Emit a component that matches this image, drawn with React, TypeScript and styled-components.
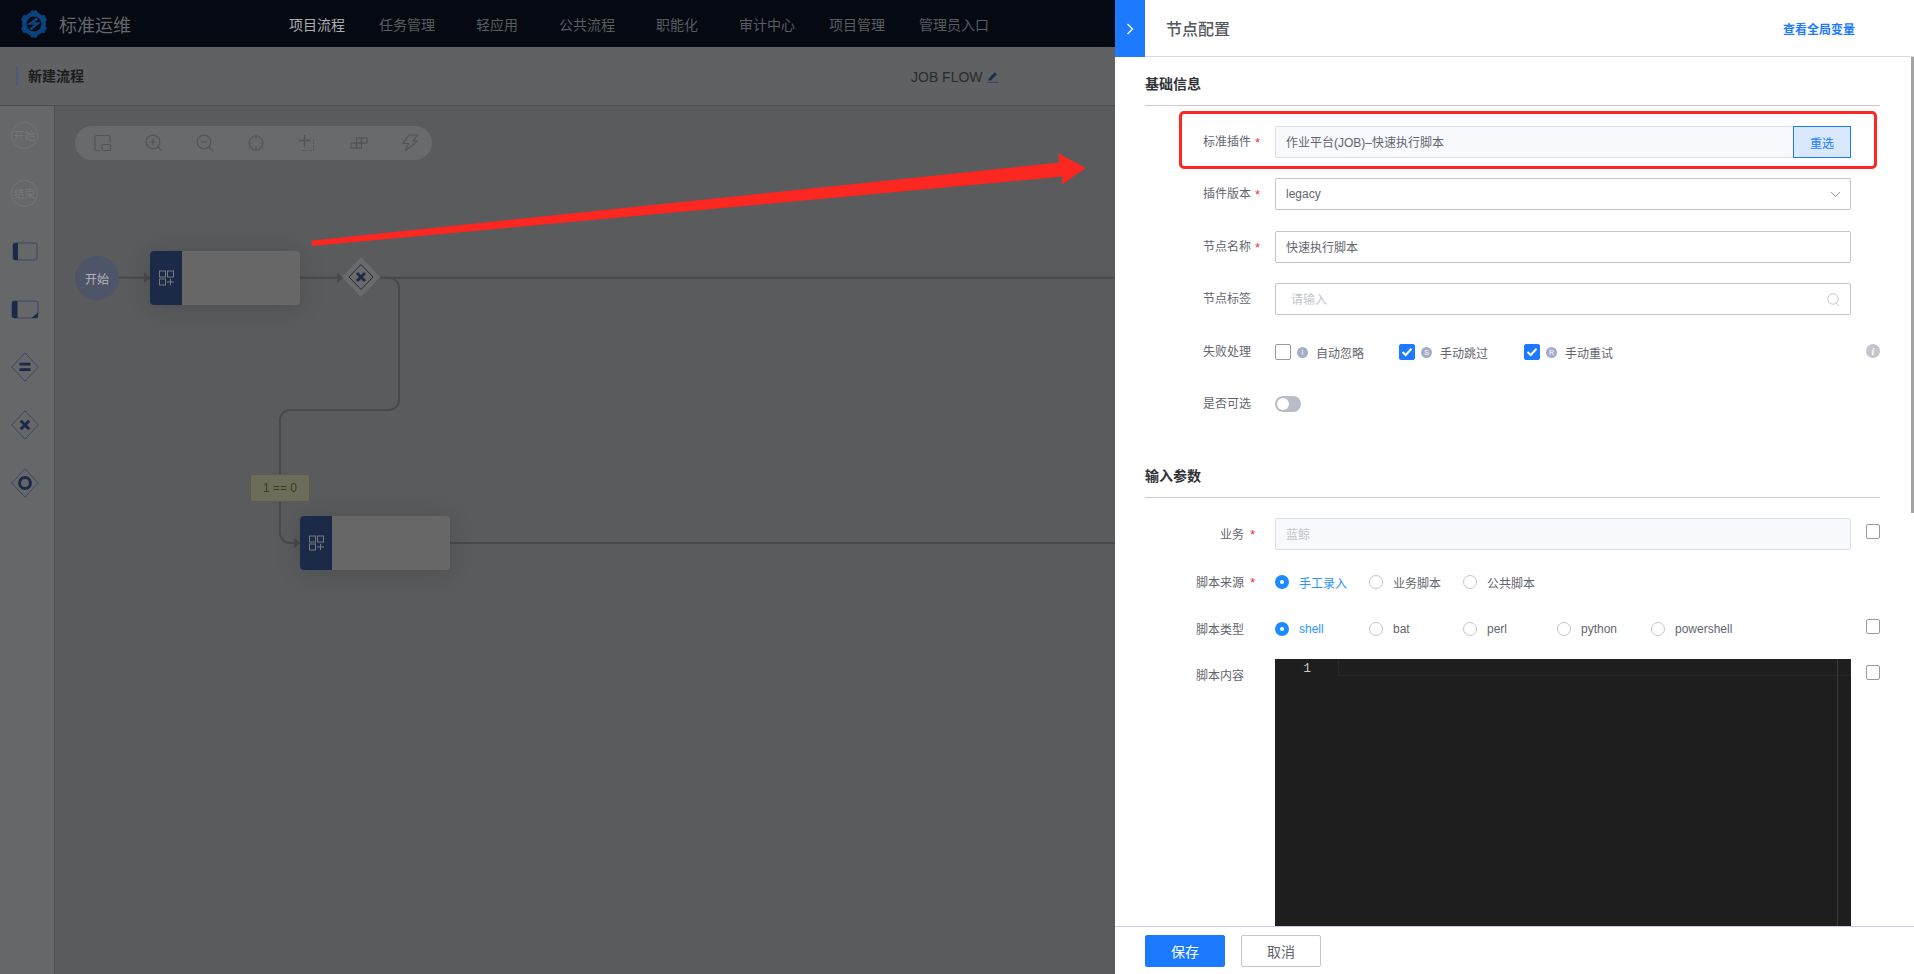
import React from 'react';
import styled, { createGlobalStyle } from 'styled-components';

const GlobalStyle = createGlobalStyle`
  html, body {
    margin: 0;
    padding: 0;
    background: #5a5b5d;
  }

  * {
    box-sizing: border-box;
  }

  body {
    font-family: 'Liberation Sans', 'Noto Sans CJK SC', sans-serif;
    font-size: 12px;
  }
`;

const Screen = styled.div`
  position: relative;
  width: 1914px;
  height: 974px;
  overflow: hidden;
`;

const Page = styled.div`
  display: flex;
  flex-direction: column;
  height: 100%;
`;

const TopBar = styled.header`
  display: flex;
  align-items: center;
  flex: 0 0 47px;
  padding-left: 20px;
  background: #050a12;
`;

const Brand = styled.div`
  display: flex;
  align-items: center;
  gap: 11px;
  width: 252px;
  font-size: 18px;
  color: #63666b;
`;

const Nav = styled.nav`
  display: flex;
  align-items: center;
`;

const NavItem = styled.a<{ $active?: boolean; $wide?: boolean }>`
  width: ${(p) => (p.$wide ? 104 : 90)}px;
  text-align: center;
  font-size: 14px;
  color: ${(p) => (p.$active ? '#abadb0' : '#595c61')};
`;

const SubBar = styled.div`
  position: relative;
  display: flex;
  align-items: center;
  flex: 0 0 59px;
  padding-left: 16px;
  background: #5f6163;
  border-bottom: 1px solid #4d4e50;
`;

const PageTitle = styled.h1`
  margin: 0;
  padding-left: 10px;
  border-left: 2px solid #4a5a80;
  font-size: 14px;
  font-weight: 700;
  line-height: 20px;
  color: #1c1d1f;
`;

const FlowName = styled.div`
  position: absolute;
  left: 911px;
  top: 20px;
  display: flex;
  align-items: center;
  gap: 4px;
  font-size: 14px;
  line-height: 20px;
  color: #2a2b2d;
`;

const Body = styled.div`
  display: flex;
  flex: 1;
  min-height: 0;
`;

const Palette = styled.aside`
  flex: 0 0 55px;
  background: #666768;
  border-right: 1px solid #505153;
`;

const PaletteItem = styled.div`
  display: flex;
  align-items: center;
  justify-content: center;
  height: 58px;
  padding-right: 5px;
`;

const EventCircle = styled.div`
  display: flex;
  align-items: center;
  justify-content: center;
  width: 27px;
  height: 27px;
  border: 1px solid #747577;
  border-radius: 50%;
  font-size: 11px;
  color: #777;
`;

const Canvas = styled.main`
  position: relative;
  flex: 1;
  background: #5a5b5d;
`;

const CanvasTools = styled.div`
  position: absolute;
  left: 20px;
  top: 20px;
  display: flex;
  align-items: center;
  width: 357px;
  height: 34px;
  padding-left: 2px;
  border-radius: 17px;
  background: #696a6c;
`;

const ToolSlot = styled.span`
  display: flex;
  align-items: center;
  justify-content: center;
  flex: 0 0 51.2px;
  height: 100%;
  color: #535456;
`;

const EdgeLayer = styled.svg`
  position: absolute;
  left: 0;
  top: 0;
`;

const TaskNode = styled.div<{ $x: number; $y: number }>`
  position: absolute;
  left: ${(p) => p.$x}px;
  top: ${(p) => p.$y}px;
  display: flex;
  width: 150px;
  height: 54px;
  overflow: hidden;
  border-radius: 4px;
  background: #676767;
  box-shadow: 0 2px 24px rgba(0, 0, 0, 0.15);
`;

const TaskIcon = styled.div`
  display: flex;
  align-items: center;
  justify-content: center;
  flex: 0 0 32px;
  background: #1b2a47;
  color: #77797e;
`;

const StartNode = styled.div`
  position: absolute;
  left: 20px;
  top: 150px;
  display: flex;
  align-items: center;
  justify-content: center;
  width: 44px;
  height: 44px;
  border-radius: 50%;
  background: #4e5569;
  font-size: 12px;
  color: #b4b6ba;
`;

const Gateway = styled.div`
  position: absolute;
  left: 287px;
  top: 151px;
  width: 38px;
  height: 40px;
`;

const BranchLabel = styled.div`
  position: absolute;
  left: 195px;
  top: 368px;
  display: flex;
  align-items: center;
  justify-content: center;
  width: 60px;
  height: 28px;
  border: 1px solid #5c5b46;
  border-radius: 2px;
  background: #6d6c5a;
  font-size: 12px;
  color: #3c3b20;
`;

const Arrow = styled.svg`
  position: absolute;
  left: 0;
  top: 0;
  pointer-events: none;
`;

const Panel = styled.section`
  position: absolute;
  right: 0;
  top: 0;
  bottom: 0;
  display: flex;
  flex-direction: column;
  width: 799px;
  background: #fff;
`;

const PanelHead = styled.div`
  display: flex;
  align-items: center;
  flex: 0 0 57px;
  padding-right: 59px;
  border-bottom: 1px solid #d8dae6;
`;

const CollapseTab = styled.div`
  display: flex;
  align-items: center;
  justify-content: center;
  flex: 0 0 30px;
  height: 57px;
  margin-bottom: -1px;
  background: #1b7aff;
  color: #fff;
`;

const PanelTitle = styled.h2`
  flex: 1;
  margin: 0 0 0 21px;
  font-size: 16px;
  font-weight: 500;
  color: #55575c;
`;

const HeadLink = styled.a`
  font-size: 12px;
  font-weight: 700;
  color: #1b7aff;
`;

const PanelBody = styled.div`
  position: relative;
  flex: 1;
  min-height: 0;
  overflow: hidden;
  padding: 17px 34px 0 30px;
`;

const ScrollThumb = styled.div`
  position: absolute;
  right: 0;
  top: 0;
  width: 3px;
  height: 456px;
  background: #a4a4a4;
`;

const SectionTitle = styled.h3<{ $top: number }>`
  margin: ${(p) => p.$top}px 0 20px;
  padding-bottom: 11px;
  border-bottom: 1px solid #cacaca;
  font-size: 14px;
  font-weight: 700;
  line-height: 20px;
  color: #313238;
`;

const Row = styled.div<{ $after: number }>`
  position: relative;
  display: flex;
  align-items: center;
  min-height: 32px;
  margin-bottom: ${(p) => p.$after}px;
`;

const Highlight = styled.div`
  position: absolute;
  left: 34px;
  right: 3px;
  top: -15px;
  bottom: -11px;
  border: 3px solid #fb2720;
  border-radius: 5px;
`;

const Label = styled.label<{ $inset: number }>`
  position: relative;
  flex: 0 0 130px;
  height: 32px;
  padding-top: ${(p) => (p.$inset > 24 ? 1 : 0)}px;
  padding-right: ${(p) => p.$inset}px;
  text-align: right;
  font-size: 12px;
  line-height: 32px;
  color: #63656e;
  align-self: flex-start;
`;

const Star = styled.i<{ $right: number }>`
  position: absolute;
  right: ${(p) => p.$right}px;
  top: 1px;
  font-style: normal;
  font-size: 13px;
  color: #ea3636;
`;

const Field = styled.div<{ $soft?: boolean }>`
  position: relative;
  display: flex;
  align-items: center;
  flex: 0 0 576px;
  height: 32px;
  padding: 0 0 1px 10px;
  border: 1px solid ${(p) => (p.$soft ? '#dcdee5' : '#c4c6cc')};
  border-radius: 2px;
  background: ${(p) => (p.$soft ? '#f8f9fd' : '#fff')};
  font-size: 12px;
  color: #63656e;
`;

const Muted = styled.span<{ $indent?: number }>`
  padding-left: ${(p) => p.$indent ?? 0}px;
  color: #c4c6cc;
`;

const RepickButton = styled.button`
  position: absolute;
  right: -1px;
  top: -1px;
  width: 58px;
  height: 32px;
  padding: 0;
  border: 1px solid #1b7aff;
  background: #d9e8fd;
  font: inherit;
  color: #1b7aff;
`;

const FieldIcon = styled.span<{ $right: number; $color: string }>`
  position: absolute;
  right: ${(p) => p.$right}px;
  top: 9px;
  display: flex;
  color: ${(p) => p.$color};
`;

const OptionGroup = styled.div`
  display: flex;
  align-items: center;
  flex: 0 0 576px;
`;

const CheckOption = styled.div<{ $width: number }>`
  display: flex;
  align-items: center;
  flex: 0 0 ${(p) => p.$width}px;
  color: #63656e;
`;

const Box = styled.span<{ $on?: boolean }>`
  display: flex;
  align-items: center;
  justify-content: center;
  width: 16px;
  height: 16px;
  margin-right: 6px;
  border: 1px solid ${(p) => (p.$on ? '#1b7aff' : '#979ba5')};
  border-radius: 2px;
  background: ${(p) => (p.$on ? '#1b7aff' : '#fff')};
`;

const Badge = styled.span`
  display: flex;
  align-items: center;
  justify-content: center;
  width: 11px;
  height: 11px;
  margin-right: 8px;
  border-radius: 50%;
  background: #a3adc8;
  font-size: 7px;
  color: #fff;
`;

const SideInfo = styled.span`
  display: flex;
  align-self: flex-start;
  margin: 8px 0 0 15px;
`;

const SideCheck = styled.span`
  align-self: flex-start;
  width: 14px;
  height: 15px;
  margin: 6px 0 0 15px;
  border: 1px solid #979ba5;
  border-radius: 2px;
`;

const Toggle = styled.span`
  display: flex;
  align-items: center;
  width: 26px;
  height: 16px;
  padding-left: 2px;
  border-radius: 8px;
  background: #b8bcc6;

  &::before {
    content: '';
    width: 12px;
    height: 12px;
    border-radius: 50%;
    background: #fff;
  }
`;

const RadioOption = styled.div<{ $on?: boolean }>`
  display: flex;
  align-items: center;
  gap: 10px;
  flex: 0 0 94px;
  color: ${(p) => (p.$on ? '#2b93ff' : '#63656e')};
`;

const RadioDot = styled.span<{ $on?: boolean }>`
  width: 14px;
  height: 14px;
  border-radius: 50%;
  border: ${(p) => (p.$on ? '5px solid #1b8cff' : '1px solid #c4c6cc')};
  background: #fff;
`;

const Editor = styled.div`
  position: relative;
  display: flex;
  flex: 0 0 576px;
  height: 300px;
  background: #1e1e1e;
  color: #c8c8c8;
`;

const LineNumber = styled.span`
  flex: 0 0 63px;
  padding-right: 27px;
  text-align: right;
  font-family: 'Liberation Mono', monospace;
  font-size: 13px;
  line-height: 19px;
`;

const CurrentLine = styled.div`
  flex: 1;
  height: 17px;
  border: 1px solid #282828;
  border-top: 0;
`;

const EditorRuler = styled.div`
  position: absolute;
  right: 13px;
  top: 0;
  bottom: 0;
  width: 1px;
  background: #3a3a3a;
`;

const PanelFoot = styled.div`
  display: flex;
  align-items: center;
  gap: 16px;
  flex: 0 0 48px;
  padding-left: 30px;
  border-top: 1px solid #cacfdf;
  background: #fff;
`;

const FootButton = styled.button<{ $primary?: boolean }>`
  width: 80px;
  height: 32px;
  padding: 0;
  border: 1px solid ${(p) => (p.$primary ? '#1b7aff' : '#c4c6cc')};
  border-radius: 2px;
  background: ${(p) => (p.$primary ? '#1b7aff' : '#fff')};
  font-family: inherit;
  font-size: 14px;
  color: ${(p) => (p.$primary ? '#fff' : '#63656e')};
`;

const NAV_ITEMS = ['项目流程', '任务管理', '轻应用', '公共流程', '职能化', '审计中心', '项目管理'];

const Logo = () => (
  <svg width="28" height="28" viewBox="0 0 28 28">
    <g fill="#0a437f">
      {[0, 60, 120, 180, 240, 300].map((a) => (
        <path key={a} d="M11 0.6h6l1 5h-8z" transform={`rotate(${a} 14 14)`} />
      ))}
    </g>
    <circle cx="14" cy="14" r="9.6" fill="none" stroke="#0a437f" strokeWidth="4.4" />
    <path d="M17.5 8.5 10.500 13.500h7L10.500 19.500" fill="none" stroke="#0a437f" strokeWidth="2.6" />
  </svg>
);

const Pencil = () => (
  <svg width="12" height="12" viewBox="0 0 12 12">
    <path d="M1.500 8 7.600 1.200l2.400 2L4 9.600H1.500z" fill="#1f2c4a" />
    <path d="M0 11.400h12" stroke="#3b4a6d" strokeWidth="1.200" />
  </svg>
);

const PaletteTask = ({ sub }: { sub?: boolean }) => (
  <svg width="28" height="19" viewBox="0 0 28 19">
    <rect x={sub ? 1 : 2} y="1" width={sub ? 26 : 24} height="17" rx="2" fill="none" stroke="#3a4767" />
    <path
      d={sub ? 'M3 1h3.500v17H3a2 2 0 0 1-2-2V3a2 2 0 0 1 2-2z' : 'M4 1h3v17H4a2 2 0 0 1-2-2V3a2 2 0 0 1 2-2z'}
      fill="#1b2a47"
    />
    {sub && <path d="M27 12.500V16a2 2 0 0 1-2 2h-4.500z" fill="#1b2a47" />}
  </svg>
);

const PaletteGateway = ({ kind }: { kind: 'parallel' | 'branch' | 'converge' }) => (
  <svg width="28" height="30" viewBox="0 0 28 30">
    <path d="M14 .8 27.200 15 14 29.200.8 15z" fill="none" stroke="#3a4767" />
    {kind === 'parallel' && <path d="M8.500 12.200h11M8.500 17.600h11" stroke="#1b2a47" strokeWidth="2.800" />}
    {kind === 'branch' && <path d="M9.800 10.800l8.400 8.400M18.200 10.800l-8.400 8.400" stroke="#1b2a47" strokeWidth="3" />}
    {kind === 'converge' && <circle cx="14" cy="15" r="5.400" fill="none" stroke="#1b2a47" strokeWidth="3" />}
  </svg>
);

const ToolIcon = ({ children }: { children: React.ReactNode }) => (
  <svg width="18" height="18" viewBox="0 0 18 18" fill="none" stroke="currentColor" strokeWidth="1.200">
    {children}
  </svg>
);

const TaskGlyph = () => (
  <svg width="15" height="16" viewBox="0 0 15 16" fill="none" stroke="currentColor" strokeWidth="1">
    <rect x="0.5" y="1" width="6" height="6" />
    <rect x="8.500" y="1" width="6" height="6" />
    <rect x="0.5" y="9" width="6" height="6" />
    <path d="M8 12h7M11.500 8.800v6.400" />
  </svg>
);

const Tick = () => (
  <svg width="12" height="10" viewBox="0 0 12 10">
    <path d="M1.500 5 4.700 8 10.500 1.800" fill="none" stroke="#fff" strokeWidth="2" />
  </svg>
);

const StandardForm = () => (
  <>
    <SectionTitle $top={0}>基础信息</SectionTitle>
    <Row $after={20}>
      <Highlight />
      <Label $inset={24}>
        标准插件<Star $right={15}>*</Star>
      </Label>
      <Field $soft>
        作业平台(JOB)–快速执行脚本
        <RepickButton>重选</RepickButton>
      </Field>
    </Row>
    <Row $after={21}>
      <Label $inset={24}>
        插件版本<Star $right={15}>*</Star>
      </Label>
      <Field>
        legacy
        <FieldIcon $right={9} $color="#979ba5">
          <svg width="11" height="12" viewBox="0 0 11 12" fill="none" stroke="currentColor">
            <path d="M1 4l4.500 4.500L10 4" />
          </svg>
        </FieldIcon>
      </Field>
    </Row>
    <Row $after={20}>
      <Label $inset={24}>
        节点名称<Star $right={15}>*</Star>
      </Label>
      <Field>快速执行脚本</Field>
    </Row>
    <Row $after={21}>
      <Label $inset={24}>节点标签</Label>
      <Field>
        <Muted $indent={5}>请输入</Muted>
        <FieldIcon $right={10} $color="#c4c6cc">
          <svg width="13" height="14" viewBox="0 0 13 14" fill="none" stroke="currentColor">
            <circle cx="6" cy="6" r="5.200" />
            <path d="M9.600 10l2.400 3" />
          </svg>
        </FieldIcon>
      </Field>
    </Row>
    <Row $after={20}>
      <Label $inset={24}>失败处理</Label>
      <OptionGroup>
        <CheckOption $width={124}>
          <Box />
          <Badge>I</Badge>
          自动忽略
        </CheckOption>
        <CheckOption $width={125}>
          <Box $on>
            <Tick />
          </Box>
          <Badge>S</Badge>
          手动跳过
        </CheckOption>
        <CheckOption $width={120}>
          <Box $on>
            <Tick />
          </Box>
          <Badge>R</Badge>
          手动重试
        </CheckOption>
      </OptionGroup>
      <SideInfo>
        <svg width="14" height="14" viewBox="0 0 14 14">
          <circle cx="7" cy="7" r="7" fill="#c4c6cc" />
          <text x="7" y="11" textAnchor="middle" fontSize="10" fontStyle="italic" fontWeight="700" fill="#fff" fontFamily="Liberation Serif, serif">
            i
          </text>
        </svg>
      </SideInfo>
    </Row>
    <Row $after={0}>
      <Label $inset={24}>是否可选</Label>
      <Toggle />
    </Row>
  </>
);

const ScriptForm = () => (
  <>
    <SectionTitle $top={46}>输入参数</SectionTitle>
    <Row $after={16}>
      <Label $inset={31}>
        业务<Star $right={20}>*</Star>
      </Label>
      <Field $soft>
        <Muted>蓝鲸</Muted>
      </Field>
      <SideCheck />
    </Row>
    <Row $after={15}>
      <Label $inset={31}>
        脚本来源<Star $right={20}>*</Star>
      </Label>
      <OptionGroup>
        <RadioOption $on>
          <RadioDot $on />
          手工录入
        </RadioOption>
        <RadioOption>
          <RadioDot />
          业务脚本
        </RadioOption>
        <RadioOption>
          <RadioDot />
          公共脚本
        </RadioOption>
      </OptionGroup>
    </Row>
    <Row $after={14}>
      <Label $inset={31}>脚本类型</Label>
      <OptionGroup>
        <RadioOption $on>
          <RadioDot $on />
          shell
        </RadioOption>
        {['bat', 'perl', 'python', 'powershell'].map((name) => (
          <RadioOption key={name}>
            <RadioDot />
            {name}
          </RadioOption>
        ))}
      </OptionGroup>
      <SideCheck />
    </Row>
    <Row $after={0}>
      <Label $inset={31}>脚本内容</Label>
      <Editor>
        <LineNumber>1</LineNumber>
        <CurrentLine />
        <EditorRuler />
      </Editor>
      <SideCheck />
    </Row>
  </>
);

const App = () => (
  <Screen>
    <GlobalStyle />
    <Page>
      <TopBar>
        <Brand>
          <Logo />
          标准运维
        </Brand>
        <Nav>
          {NAV_ITEMS.map((item, i) => (
            <NavItem key={item} $active={i === 0}>
              {item}
            </NavItem>
          ))}
          <NavItem $wide>管理员入口</NavItem>
        </Nav>
      </TopBar>
      <SubBar>
        <PageTitle>新建流程</PageTitle>
        <FlowName>
          JOB FLOW
          <Pencil />
        </FlowName>
      </SubBar>
      <Body>
        <Palette>
          <PaletteItem>
            <EventCircle>开始</EventCircle>
          </PaletteItem>
          <PaletteItem>
            <EventCircle>结束</EventCircle>
          </PaletteItem>
          <PaletteItem>
            <PaletteTask />
          </PaletteItem>
          <PaletteItem>
            <PaletteTask sub />
          </PaletteItem>
          <PaletteItem>
            <PaletteGateway kind="parallel" />
          </PaletteItem>
          <PaletteItem>
            <PaletteGateway kind="branch" />
          </PaletteItem>
          <PaletteItem>
            <PaletteGateway kind="converge" />
          </PaletteItem>
        </Palette>
        <Canvas>
          <CanvasTools>
            <ToolSlot>
              <ToolIcon>
                <path d="M16 8.500V3a1.500 1.500 0 0 0-1.500-1.500h-12A1.500 1.500 0 0 0 1 3v12a1.500 1.500 0 0 0 1.500 1.500H6" />
                <rect x="8" y="10.500" width="8.500" height="6" rx="1" />
              </ToolIcon>
            </ToolSlot>
            <ToolSlot>
              <ToolIcon>
                <circle cx="8" cy="8" r="6.800" />
                <path d="M8 4.800v6.400M4.800 8h6.400M13 13l4 4" />
              </ToolIcon>
            </ToolSlot>
            <ToolSlot>
              <ToolIcon>
                <circle cx="8" cy="8" r="6.800" />
                <path d="M4.800 8h6.400M13 13l4 4" />
              </ToolIcon>
            </ToolSlot>
            <ToolSlot>
              <ToolIcon>
                <circle cx="9" cy="9" r="7" />
                <path d="M9 1.500v3.500M9 13v3.500M1.500 9h3.500M13 9h3.500" />
              </ToolIcon>
            </ToolSlot>
            <ToolSlot>
              <ToolIcon>
                <path d="M6.500 1v12M.5 6.500h12" strokeWidth="1.400" />
                <path d="M15.500 6v11M4.500 16.500H17" strokeDasharray="1.400 1.200" />
              </ToolIcon>
            </ToolSlot>
            <ToolSlot>
              <ToolIcon>
                <rect x="1" y="9" width="5.500" height="5" />
                <rect x="6.500" y="9" width="5" height="5" />
                <rect x="6.500" y="4" width="5" height="5" />
                <rect x="11.500" y="4" width="5.500" height="5" />
              </ToolIcon>
            </ToolSlot>
            <ToolSlot>
              <ToolIcon>
                <path d="M8 1h8.500L12 7h4.500L4 17l3.500-7.500H2z" />
              </ToolIcon>
            </ToolSlot>
          </CanvasTools>

          <EdgeLayer width="1060" height="600" viewBox="0 0 1060 600" fill="none" stroke="#48494b" strokeWidth="2">
            <path d="M64 171.700H95" />
            <path d="M245 171.700H288" />
            <path d="M325 171.700H1060" />
            <path d="M325 171.700h9a10 10 0 0 1 10 10V294a10 10 0 0 1-10 10H235a10 10 0 0 0-10 10V427a10 10 0 0 0 10 10h10" />
            <path d="M395 437H1060" />
            <path d="M89 166.500l6 5.200-6 5.200zM282 166.500l6 5.200-6 5.200zM239 431.800l6 5.200-6 5.200z" fill="#48494b" stroke="none" />
          </EdgeLayer>

          <StartNode>开始</StartNode>
          <TaskNode $x={95} $y={145}>
            <TaskIcon>
              <TaskGlyph />
            </TaskIcon>
          </TaskNode>
          <Gateway>
            <svg width="38" height="40" viewBox="0 0 38 40">
              <path d="M19 0 38 20 19 40 0 20z" fill="#6a6a6b" />
              <path d="M19 7.500 31 20 19 32.500 7 20z" fill="none" stroke="#1b2a47" />
              <path d="M15 16l8 8M23 16l-8 8" stroke="#1b2a47" strokeWidth="2.800" />
            </svg>
          </Gateway>
          <BranchLabel>1 == 0</BranchLabel>
          <TaskNode $x={245} $y={410}>
            <TaskIcon>
              <TaskGlyph />
            </TaskIcon>
          </TaskNode>
        </Canvas>
      </Body>
    </Page>

    <Arrow width="1114" height="300" viewBox="0 0 1114 300">
      <path d="M312 241 1060 163 1058.600 154 1085 168 1062 184 1063.500 176 312 245.500z" fill="#fb2720" stroke="#fb2720" strokeWidth="1" strokeLinejoin="round" />
    </Arrow>

    <Panel>
      <PanelHead>
        <CollapseTab>
          <svg width="10" height="14" viewBox="0 0 10 14" fill="none" stroke="currentColor" strokeWidth="1.400">
            <path d="M2.500 2 7.500 7l-5 5" />
          </svg>
        </CollapseTab>
        <PanelTitle>节点配置</PanelTitle>
        <HeadLink>查看全局变量</HeadLink>
      </PanelHead>
      <PanelBody>
        <ScrollThumb />
        <StandardForm />
        <ScriptForm />
      </PanelBody>
      <PanelFoot>
        <FootButton $primary>保存</FootButton>
        <FootButton>取消</FootButton>
      </PanelFoot>
    </Panel>
  </Screen>
);

export default App;
